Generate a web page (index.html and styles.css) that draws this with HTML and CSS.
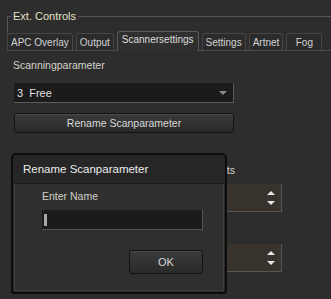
FILE: index.html
```html
<!DOCTYPE html>
<html lang="en">
<head>
  <meta charset="UTF-8" />
  <title>Ext. Controls</title>
  <link rel="stylesheet" href="styles.css">
</head>
<body>
  <div class="group-frame">
    <span class="group-title">Ext. Controls</span>
  </div>

  <div class="tabs">
    <div class="tab">APC Overlay</div>
    <div class="tab">Output</div>
    <div class="tab active">Scannersettings</div>
    <div class="tab">Settings</div>
    <div class="tab">Artnet</div>
    <div class="tab tab-fog">Fog</div>
  </div>

  <div class="pane">
    <div class="label">Scanningparameter</div>
    <div class="combo">
      <span>3&nbsp; Free</span>
      <span class="combo-arrow"></span>
    </div>
    <button class="btn btn-wide">Rename Scanparameter</button>

    <div class="label label-right">Number of Scanpoints</div>
    <div class="spin">
      <span class="spin-up"></span>
      <span class="spin-down"></span>
    </div>

    <div class="label label-gap">Scanspeed</div>
    <div class="spin">
      <span class="spin-up"></span>
      <span class="spin-down"></span>
    </div>
  </div>

  <!-- modal dialog on top of the pane -->
  <div class="dialog">
    <div class="dialog-title">Rename Scanparameter</div>
    <div class="dialog-body">
      <div class="label dialog-label">Enter Name</div>
      <div class="input"><span class="caret"></span></div>
      <div class="dialog-actions">
        <button class="btn btn-ok">OK</button>
      </div>
    </div>
  </div>
</body>
</html>
```

FILE: styles.css
```css
body {
  margin: 0;
  background: #2d2d2d;
  color: #d6d6d6;
  font-family: 'Liberation Sans', Arial, sans-serif;
  font-size: 10.5px;
  width: 331px;
  height: 299px;
  overflow: hidden;
  position: relative;
}

/* Group box header */
.group-frame {
  margin: 16px 0 0 7px;
  height: 16px;
  border-top: 1px solid #575757;
  border-left: 1px solid #575757;
  position: relative;
}

.group-title {
  position: absolute;
  top: -8px;
  left: 3px;
  padding: 0 2px;
  background: #2d2d2d;
  color: #e4e0c4;
  font-size: 11px;
  line-height: 14px;
}

/* Tabs */
.tabs {
  display: flex;
  align-items: flex-end;
  gap: 3px;
  height: 17px;
  margin-left: 7px;
  border-bottom: 1px solid #4a4a4a;
}

.tab {
  flex-shrink: 0;
  white-space: nowrap;
  height: 17px;
  line-height: 17px;
  padding: 0 3px;
  border: 1px solid #464646;
  border-bottom: none;
  border-radius: 3px 3px 0 0;
  background: #2b2b2b;
  color: #d2d2d2;
  box-sizing: border-box;
  text-align: center;
  font-size: 10px;
}

.tab.active {
  height: 20px;
  line-height: 16px;
  padding: 0 4px;
  background: #2f2f2f;
  border-color: #5a5a5a;
  color: #dedede;
  margin-bottom: -1px;
}

.tab-fog {
  min-width: 36px;
}

/* Pane content */
.pane {
  padding: 8px 0 0 13px;
  display: flex;
  flex-direction: column;
  align-items: flex-start;
}

.label {
  line-height: 13px;
  color: #d4d4cc;
}

.label-right {
  width: 222px;
  text-align: right;
  margin-top: 31px;
}

.label-gap {
  margin-top: 12px;
}

.combo {
  margin: 11px 0 0 1px;
  width: 220px;
  height: 20px;
  box-sizing: border-box;
  background: #1b1b1b;
  border-right: 1px solid #5a5a5a;
  border-bottom: 1px solid #5a5a5a;
  display: flex;
  align-items: center;
  justify-content: space-between;
  padding: 0 6px 0 3px;
  font-size: 11px;
  color: #e2e2e2;
}

.combo-arrow {
  width: 0;
  height: 0;
  border-left: 4px solid transparent;
  border-right: 4px solid transparent;
  border-top: 4px solid #8a8a8a;
}

.btn {
  font-family: inherit;
  font-size: 10.5px;
  color: #d8d8d8;
  background: linear-gradient(#3a3a3a, #2a2a2a);
  border: 1px solid #121212;
  border-radius: 3px;
  box-shadow: inset 0 1px 0 #4a4a4a;
  padding: 0;
  box-sizing: border-box;
}

.btn-wide {
  margin: 10px 0 0 1px;
  width: 220px;
  height: 20px;
}

.spin {
  margin: 7px 0 0 1px;
  width: 268px;
  height: 28px;
  box-sizing: border-box;
  background: #37332c;
  border-right: 1px solid #575757;
  border-bottom: 1px solid #575757;
  display: flex;
  flex-direction: column;
  align-items: flex-end;
  justify-content: center;
  gap: 6px;
  padding-right: 6px;
}

.spin-up,
.spin-down {
  width: 0;
  height: 0;
  border-left: 4px solid transparent;
  border-right: 4px solid transparent;
}

.spin-up {
  border-bottom: 4px solid #e6e6e6;
}

.spin-down {
  border-top: 4px solid #e6e6e6;
}

/* Dialog */
.dialog {
  position: absolute;
  left: 11px;
  top: 153px;
  width: 216px;
  height: 141px;
  box-sizing: border-box;
  border: 2px solid #0d0d0d;
  border-radius: 5px 5px 3px 3px;
  background: #262626;
  display: flex;
  flex-direction: column;
}

.dialog-title {
  height: 28px;
  line-height: 28px;
  padding-left: 10px;
  color: #ececec;
  font-size: 11.5px;
  border-bottom: 1px solid #1a1a1a;
}

.dialog-body {
  flex: 1;
  margin: 0 1px 1px;
  background: #2f2f2f;
  border: 1px solid #404040;
  border-top: none;
  padding: 6px 0 0 27px;
}

.dialog-label {
  color: #d0d0c4;
}

.input {
  margin-top: 7px;
  width: 161px;
  height: 20px;
  box-sizing: border-box;
  background: #1b1b1b;
  border-right: 1px solid #555;
  border-bottom: 1px solid #555;
  display: flex;
  align-items: center;
  padding-left: 2px;
}

.caret {
  width: 3px;
  height: 12px;
  background: #a8a8a8;
}

.dialog-actions {
  display: flex;
  justify-content: flex-end;
  width: 161px;
  margin-top: 20px;
}

.btn-ok {
  width: 74px;
  height: 24px;
  font-size: 11px;
}
```
